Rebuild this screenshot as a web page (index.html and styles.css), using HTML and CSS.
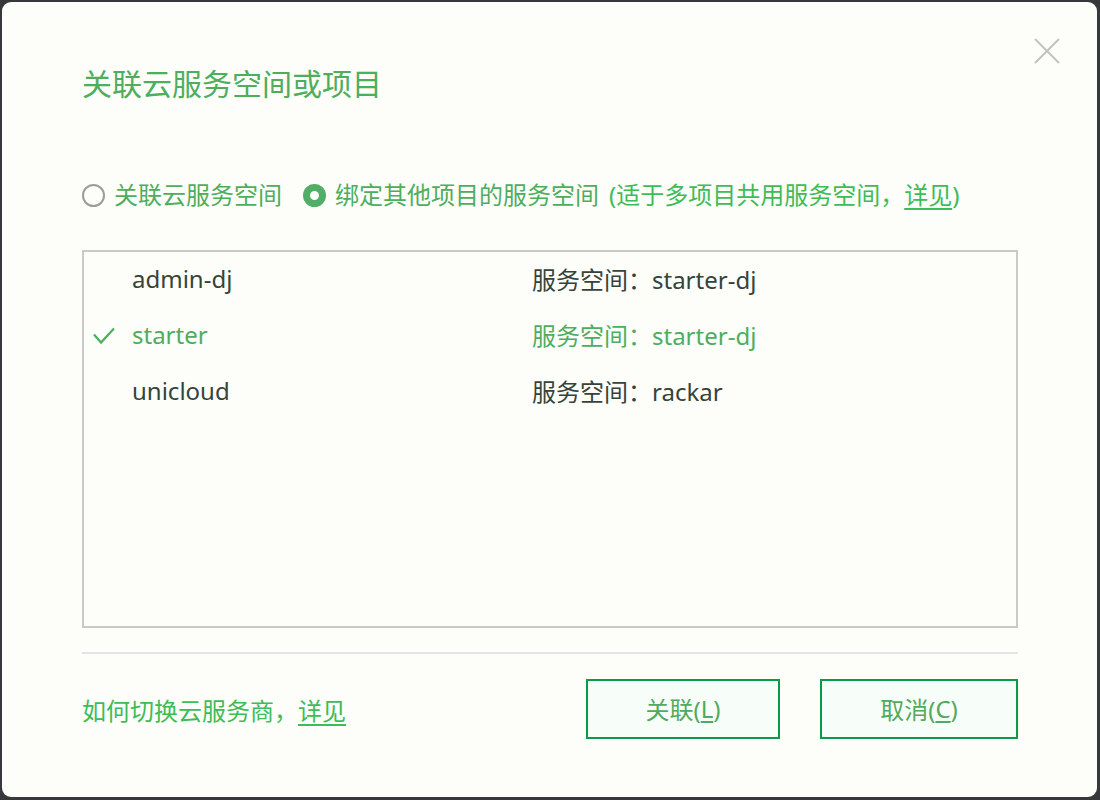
FILE: index.html
```html
<!DOCTYPE html>
<html lang="zh-CN">
<head>
<meta charset="utf-8">
<title>关联云服务空间或项目</title>
<link rel="stylesheet" href="styles.css">
</head>
<body>
<div class="dialog">
  <button class="close" aria-label="关闭">
    <svg width="26" height="26" viewBox="0 0 26 26"><path d="M1 1L25 25M25 1L1 25" stroke="#c2c2c2" stroke-width="2" fill="none"/></svg>
  </button>
  <h1 class="title">关联云服务空间或项目</h1>

  <div class="radios">
    <label class="radio">
      <span class="dot"></span>
      <span class="rlabel">关联云服务空间</span>
    </label>
    <label class="radio checked">
      <span class="dot"></span>
      <span class="rlabel">绑定其他项目的服务空间</span>
      <span class="hint">(适于多项目共用服务空间，<u>详见</u>)</span>
    </label>
  </div>

  <div class="list">
    <div class="row">
      <span class="check"></span>
      <span class="name">admin-dj</span>
      <span class="space">服务空间：starter-dj</span>
    </div>
    <div class="row selected">
      <span class="check"><svg width="22" height="18" viewBox="0 0 22 18"><polyline points="1,7.5 8,15.5 21,1.5" fill="none" stroke="#4dae5e" stroke-width="2.2"/></svg></span>
      <span class="name">starter</span>
      <span class="space">服务空间：starter-dj</span>
    </div>
    <div class="row">
      <span class="check"></span>
      <span class="name">unicloud</span>
      <span class="space">服务空间：rackar</span>
    </div>
  </div>

  <div class="sep"></div>

  <div class="footer">
    <div class="help">如何切换云服务商，<u>详见</u></div>
    <div class="buttons">
      <button class="btn btn-ok">关联(<u>L</u>)</button>
      <button class="btn btn-cancel">取消(<u>C</u>)</button>
    </div>
  </div>
</div>
</body>
</html>
```

FILE: styles.css
```css
html, body {
  margin: 0;
  padding: 0;
}
body {
  width: 1100px;
  height: 800px;
  background: #36383b;
  padding: 2px 3px 3px 2px;
  box-sizing: border-box;
  font-family: "Noto Sans", "Noto Sans CJK SC", sans-serif;
}
.dialog {
  position: relative;
  width: 1095px;
  height: 795px;
  box-sizing: border-box;
  background: #fdfdf9;
  border-radius: 9px;
  padding: 62px 79px 0 80px;
  display: flex;
  flex-direction: column;
}
.close {
  position: absolute;
  top: 36px;
  right: 37px;
  width: 26px;
  height: 26px;
  padding: 0;
  border: 0;
  background: none;
  display: block;
}
.close svg { display: block; }
.title {
  margin: 0;
  font-size: 30px;
  font-weight: normal;
  line-height: 40px;
  color: #4dae5c;
}
.radios {
  margin-top: 73px;
  display: flex;
  align-items: center;
  height: 36px;
  font-size: 24px;
  line-height: 36px;
  color: #4dae5c;
}
.radio {
  display: flex;
  align-items: center;
}
.radio + .radio {
  margin-left: 21px;
}
.dot {
  width: 23px;
  height: 23px;
  box-sizing: border-box;
  border-radius: 50%;
  border: 2px solid #9c9c9c;
  margin-right: 9px;
  flex: none;
}
.radio.checked .dot {
  border: 7.5px solid #52ae66;
  background: #fff;
}
.hint {
  margin-left: 10px;
  color: #3dbc57;
}
.hint u {
  text-underline-offset: 4px;
}
.list {
  margin-top: 37px;
  height: 378px;
  box-sizing: border-box;
  border: 2px solid #c9c9c9;
  display: flex;
  flex-direction: column;
}
.row {
  display: flex;
  align-items: center;
  height: 56px;
  box-sizing: border-box;
  padding-bottom: 4px;
  font-size: 24px;
  color: #35443a;
}
.row.selected {
  color: #4dae5e;
}
.check {
  width: 48px;
  padding-left: 9px;
  padding-top: 4px;
  box-sizing: border-box;
  display: flex;
  align-items: center;
  flex: none;
}
.check svg { display: block; }
.name {
  width: 400px;
  flex: none;
}
.sep {
  margin-top: 24px;
  height: 2px;
  background: #e4e4e4;
}
.footer {
  margin-top: 25px;
  display: flex;
  align-items: center;
  justify-content: space-between;
}
.help {
  font-size: 24px;
  color: #3dbc57;
  margin-top: 0;
}
.help u {
  text-underline-offset: 4px;
}
.buttons {
  display: flex;
  gap: 40px;
}
.btn {
  height: 60px;
  box-sizing: border-box;
  border: 2px solid #0b9a48;
  background: #f7fdf8;
  color: #52aa5c;
  font-family: "Noto Sans", "Noto Sans CJK SC", sans-serif;
  font-size: 24px;
  padding: 0 0 2px 0;
  display: flex;
  align-items: center;
  justify-content: center;
}
.btn u { text-underline-offset: 3px; }
.btn-ok { width: 194px; }
.btn-cancel { width: 198px; }
```
